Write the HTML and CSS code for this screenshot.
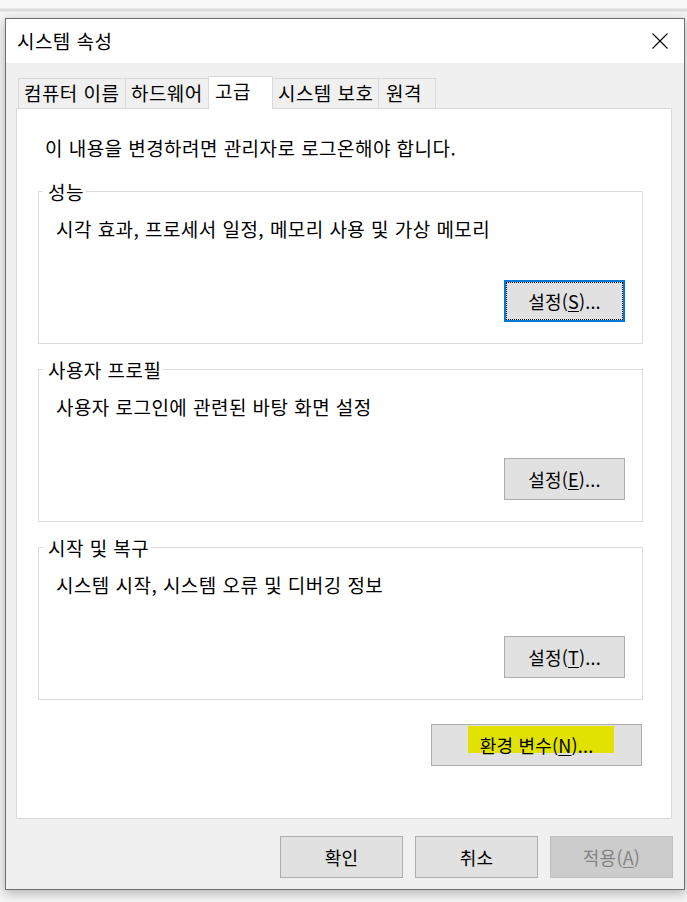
FILE: index.html
```html
<!DOCTYPE html>
<html lang="ko">
<head>
  <meta charset="UTF-8">
  <title>시스템 속성</title>
  <link rel="stylesheet" href="styles.css">
</head>
<body>
  <div class="screen">
    <div class="window">
      <div class="titlebar">
        <span class="title">시스템 속성</span>
        <svg class="close" width="16" height="16" viewBox="0 0 16 16"><path d="M0.5 0.5L15.5 15.5M15.5 0.5L0.5 15.5" stroke="#000" stroke-width="1.1" fill="none"/></svg>
      </div>
      <div class="body">
        <div class="tabs">
          <div class="tab tab-name">컴퓨터 이름</div>
          <div class="tab tab-hw">하드웨어</div>
          <div class="tab tab-adv active">고급</div>
          <div class="tab tab-prot">시스템 보호</div>
          <div class="tab tab-remote">원격</div>
        </div>
        <div class="panel">
          <p class="notice">이 내용을 변경하려면 관리자로 로그온해야 합니다.</p>

          <div class="group">
            <div class="group-title">성능</div>
            <p class="group-desc">시각 효과, 프로세서 일정, 메모리 사용 및 가상 메모리</p>
            <div class="group-actions">
              <button class="btn btn-set focused">설정(<u>S</u>)...</button>
            </div>
          </div>

          <div class="group">
            <div class="group-title">사용자 프로필</div>
            <p class="group-desc">사용자 로그인에 관련된 바탕 화면 설정</p>
            <div class="group-actions">
              <button class="btn btn-set">설정(<u>E</u>)...</button>
            </div>
          </div>

          <div class="group">
            <div class="group-title">시작 및 복구</div>
            <p class="group-desc">시스템 시작, 시스템 오류 및 디버깅 정보</p>
            <div class="group-actions">
              <button class="btn btn-set">설정(<u>T</u>)...</button>
            </div>
          </div>

          <div class="env-row">
            <button class="btn btn-env"><span class="marker"></span><span class="label">환경 변수(<u>N</u>)...</span></button>
          </div>
        </div>
        <div class="footer">
          <button class="btn btn-footer">확인</button>
          <button class="btn btn-footer">취소</button>
          <button class="btn btn-footer" disabled>적용(<u>A</u>)</button>
        </div>
      </div>
    </div>
  </div>
</body>
</html>
```

FILE: styles.css
```css
* { box-sizing: border-box; }
html, body { margin: 0; padding: 0; }
body { width: 687px; height: 902px; overflow: hidden; background: #f3f3f3; font-family: "Noto Sans CJK KR", "Noto Sans", sans-serif; font-size: 19px; letter-spacing: 0.45px; color: #000; }

.screen { height: 902px; padding: 18px 0 0 5px; background: linear-gradient(#f8f8f8 0, #f8f8f8 8px, #dcdcdc 9px, #dcdcdc 11px, #f4f4f4 12px); }

.window { width: 680px; height: 872px; border: 1px solid #6e6e6e; background: #f0f0f0; box-shadow: 0 3px 10px rgba(0,0,0,0.28); display: flex; flex-direction: column; }

.titlebar { height: 44px; background: #fff; display: flex; align-items: center; justify-content: space-between; padding: 0 16px 0 11px; flex-shrink: 0; }
.title { line-height: 20px; }
.close { display: block; }

.body { flex: 1; padding: 13px 11px 11px 10px; display: flex; flex-direction: column; }

.tabs { display: flex; align-items: flex-end; padding-left: 2px; height: 32px; }
.tab { height: 30px; line-height: 28px; padding-left: 5px; border: 1px solid #d9d9d9; border-bottom: none; background: #f0f0f0; white-space: nowrap; }
.tab + .tab { margin-left: -1px; }
.tab-name { width: 108px; }
.tab-hw { width: 84px; }
.tab-adv { width: 65px; }
.tab-prot { width: 107px; }
.tab-remote { width: 58px; padding-left: 7px; }
.tab.active { height: 33px; margin-bottom: -1px; background: #fff; position: relative; z-index: 1; padding-left: 6px; }

.panel { height: 711px; margin-right: 1px; background: #fff; border: 1px solid #d9d9d9; padding: 0 0 52px 0; }
.notice { margin: 29px 0 0 28px; line-height: 20px; }

.group { margin: 25px 28px 0 21px; border: 1px solid #dcdcdc; padding: 0 17px 21px 0; }
.notice + .group { margin-top: 33px; }
.group-title { width: fit-content; margin: -10px 0 0 4px; padding: 0 2px 0 5px; background: #fff; line-height: 20px; }
.group-desc { margin: 17px 0 0 17px; line-height: 20px; }
.group-actions { display: flex; justify-content: flex-end; margin-top: 41px; }

.btn { font-family: inherit; font-size: 18px; letter-spacing: 0.2px; color: #000; background: #e1e1e1; border: 1px solid #adadad; height: 42px; padding: 0; line-height: 20px; }
.btn u { text-decoration-thickness: 1px; text-underline-offset: 2px; }
.btn-set { width: 121px; }
.btn.focused { border: 2px solid #0078d7; outline: 1px dotted #000; outline-offset: -3px; }

.env-row { display: flex; justify-content: flex-end; margin: 24px 29px 0 21px; }
.btn-env { width: 211px; position: relative; }
.btn-env .marker { position: absolute; left: 36px; top: 1px; width: 146px; height: 27px; background: #e2e200; }
.btn-env .label { position: relative; }

.footer { display: flex; justify-content: flex-end; gap: 12px; margin-top: 17px; }
.btn-footer { width: 123px; }
.btn-footer:disabled { background: #cccccc; border-color: #bfbfbf; color: #838383; }
```
